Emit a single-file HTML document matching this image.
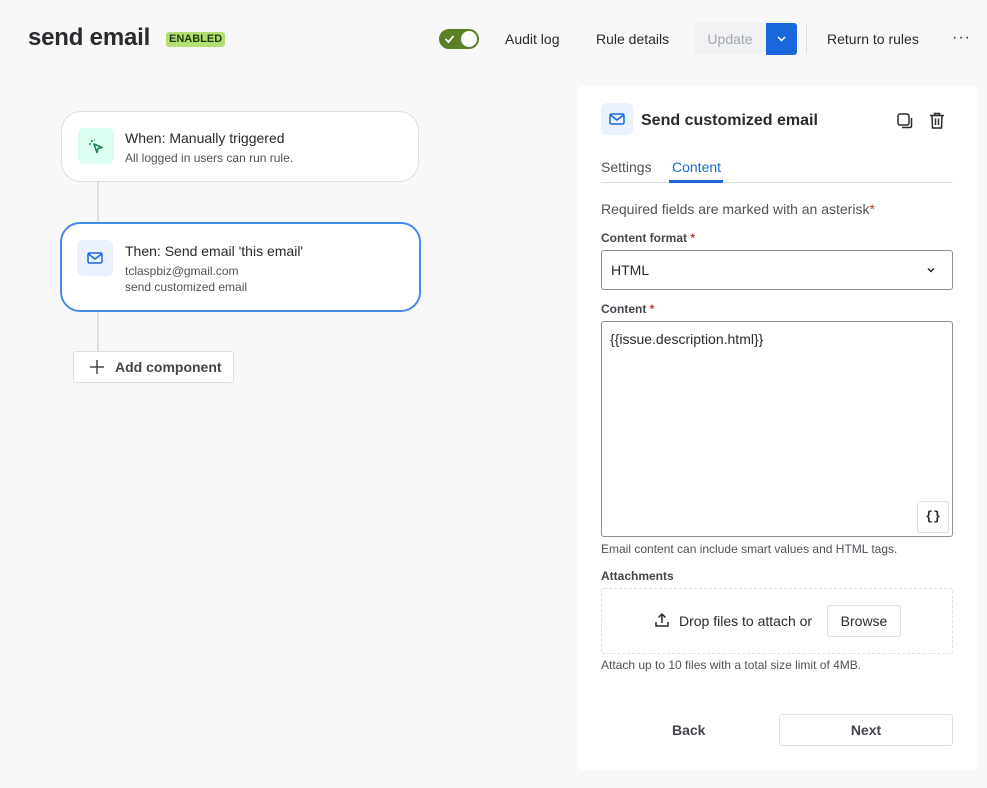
<!DOCTYPE html>
<html><head><meta charset="utf-8"><style>
*{box-sizing:border-box;margin:0;padding:0}
body{width:987px;height:788px;background:#f8f8f8;font-family:"Liberation Sans",sans-serif;color:#292a2e;position:relative;overflow:hidden}
.a{position:absolute}
.t{font-size:14px}
.card{position:absolute;background:#fff;border:1px solid #dcdfe4;border-radius:20px}
.ic{position:absolute;width:36px;height:36px;border-radius:6px}
.sub{font-size:12px;color:#505258}
.lbl{font-size:12px;font-weight:bold;color:#44464c}
.req{color:#c9372c}
</style></head><body>
<div class="a" style="left:28px;top:24px;font-size:24px;font-weight:bold;letter-spacing:-0.2px">send email</div>
<div class="a" style="left:166px;top:32px;background:#b3df72;color:#1f3a0f;font-size:11px;font-weight:bold;padding:1px 3px;border-radius:3px;line-height:13px">ENABLED</div>
<div class="a" style="left:439px;top:29px;width:40px;height:20px;border-radius:10px;background:#5b7f24">
 <svg class="a" style="left:5px;top:5px" width="11" height="10" viewBox="0 0 11 10"><path d="M1.5 5 L4.5 8 L9.5 2" stroke="#fff" stroke-width="1.8" fill="none"/></svg>
 <div class="a" style="left:22px;top:2px;width:16px;height:16px;border-radius:8px;background:#fff"></div>
</div>
<div class="a t" style="left:505px;top:31px">Audit log</div>
<div class="a t" style="left:596px;top:31px">Rule details</div>
<div class="a t" style="left:694px;top:23px;width:72px;height:32px;background:#f1f2f4;color:#a5a8ae;border-radius:3px 0 0 3px;text-align:center;line-height:32px">Update</div>
<div class="a" style="left:766px;top:23px;width:31px;height:32px;background:#1868db;border-radius:0 3px 3px 0">
 <svg class="a" style="left:10px;top:12px" width="11" height="8" viewBox="0 0 11 8"><path d="M2 2 L5.5 5.5 L9 2" stroke="#fff" stroke-width="1.5" fill="none"/></svg></div>
<div class="a" style="left:806px;top:24px;width:1px;height:30px;background:#dcdfe4"></div>
<div class="a t" style="left:827px;top:31px">Return to rules</div>
<div class="a" style="left:952px;top:29px;font-size:16px;letter-spacing:1px">···</div>

<div class="a" style="left:97px;top:182px;width:2px;height:170px;background:#dcdfe4"></div>
<div class="card" style="left:61px;top:111px;width:358px;height:71px">
 <div class="ic" style="left:16px;top:16px;background:#dcfff1"><svg class="a" style="left:8px;top:8px" width="20" height="20" viewBox="0 0 20 20"><path d="M8 8 L16 11.5 L12 12.5 L11 16.5 Z" stroke="#1f845a" stroke-width="1.6" fill="none" stroke-linejoin="round"/><path d="M4 9 A5 5 0 0 1 9 4" stroke="#1f845a" stroke-width="1.6" fill="none" stroke-dasharray="2 1.5"/></svg></div>
 <div class="a t" style="left:63px;top:18px">When: Manually triggered</div>
 <div class="a sub" style="left:63px;top:39px">All logged in users can run rule.</div>
</div>
<div class="card" style="left:60px;top:222px;width:361px;height:90px;border:2px solid #4688ec">
 <div class="ic" style="left:15px;top:16px;background:#e9f2fe"><svg class="a" style="left:9px;top:10px" width="18" height="16" viewBox="0 0 18 16"><rect x="2" y="3" width="14" height="10" rx="1.5" stroke="#1868db" stroke-width="1.5" fill="none"/><path d="M2.5 4 L9 9 L15.5 4" stroke="#1868db" stroke-width="1.5" fill="none"/></svg></div>
 <div class="a t" style="left:63px;top:19px">Then: Send email 'this email'</div>
 <div class="a sub" style="left:63px;top:40px">tclaspbiz@gmail.com</div>
 <div class="a sub" style="left:63px;top:56px">send customized email</div>
</div>
<div class="a t" style="left:73px;top:351px;width:161px;height:32px;background:#fff;border:1px solid #dcdfe4;border-radius:3px;font-weight:bold;color:#44464c;line-height:30px;padding-left:41px">Add component</div>
<svg class="a" style="left:89px;top:359px" width="16" height="16" viewBox="0 0 16 16"><path d="M8 1V15M1 8H15" stroke="#44464c" stroke-width="1.5"/></svg>

<div class="a" style="left:577px;top:86px;width:400px;height:684px;background:#fff;border-radius:6px">
 <div class="ic" style="left:24px;top:17px;width:32px;height:32px;background:#e9f2fe"><svg class="a" style="left:7px;top:8px" width="18" height="16" viewBox="0 0 18 16"><rect x="2" y="3" width="14" height="10" rx="1.5" stroke="#1868db" stroke-width="1.5" fill="none"/><path d="M2.5 4 L9 9 L15.5 4" stroke="#1868db" stroke-width="1.5" fill="none"/></svg></div>
 <div class="a" style="left:64px;top:26px;font-size:16px;font-weight:bold">Send customized email</div>
 <svg class="a" style="left:319px;top:26px" width="18" height="18" viewBox="0 0 18 18"><rect x="2" y="2" width="11" height="11" rx="2" stroke="#292a2e" stroke-width="1.5" fill="none"/><path d="M15.5 6 V14 a1.5 1.5 0 0 1 -1.5 1.5 H6" stroke="#292a2e" stroke-width="1.5" fill="none"/></svg>
 <svg class="a" style="left:351px;top:25px" width="18" height="19" viewBox="0 0 18 19"><path d="M2 4.5H16M6.5 4.5V2.5H11.5V4.5M4 4.5 L4.5 17 H13.5 L14 4.5M7.5 7.5V14M10.5 7.5V14" stroke="#292a2e" stroke-width="1.5" fill="none"/></svg>
 <div class="a t" style="left:24px;top:73px;color:#505258">Settings</div>
 <div class="a t" style="left:95px;top:73px;color:#1868db">Content</div>
 <div class="a" style="left:24px;top:96px;width:352px;height:1px;background:#dcdfe4"></div>
 <div class="a" style="left:92px;top:94px;width:54px;height:3px;background:#1868db"></div>
 <div class="a t" style="left:24px;top:115px;color:#505258">Required fields are marked with an asterisk<span class="req">*</span></div>
 <div class="a lbl" style="left:24px;top:145px">Content format <span class="req">*</span></div>
 <div class="a" style="left:24px;top:164px;width:352px;height:40px;border:1px solid #8c8f97;border-radius:3px"><div class="a t" style="left:9px;top:11px">HTML</div>
  <svg class="a" style="left:324px;top:15px" width="10" height="8" viewBox="0 0 10 8"><path d="M2 2.5 L5 5.5 L8 2.5" stroke="#292a2e" stroke-width="1.5" fill="none"/></svg></div>
 <div class="a lbl" style="left:24px;top:216px">Content <span class="req">*</span></div>
 <div class="a" style="left:24px;top:235px;width:352px;height:216px;border:1px solid #8c8f97;border-radius:3px">
  <div class="a t" style="left:8px;top:9px">{{issue.description.html}}</div>
  <div class="a" style="left:315px;top:179px;width:32px;height:32px;border:1px solid #dcdfe4;border-radius:3px;font-family:'Liberation Mono',monospace;font-size:13px;font-weight:bold;text-align:center;line-height:30px">{}</div>
 </div>
 <div class="a sub" style="left:24px;top:456px">Email content can include smart values and HTML tags.</div>
 <div class="a lbl" style="left:24px;top:483px">Attachments</div>
 <div class="a" style="left:24px;top:502px;width:352px;height:66px;border:1px dashed #dcdfe4;border-radius:3px">
  <svg class="a" style="left:52px;top:23px" width="16" height="16" viewBox="0 0 16 16"><path d="M8 11V2M4.5 5.5 L8 2 L11.5 5.5M2 10V14H14V10" stroke="#292a2e" stroke-width="1.5" fill="none"/></svg>
  <div class="a t" style="left:77px;top:24px">Drop files to attach or</div>
  <div class="a t" style="left:225px;top:16px;width:74px;height:32px;border:1px solid #dcdfe4;border-radius:3px;text-align:center;line-height:30px">Browse</div>
 </div>
 <div class="a sub" style="left:24px;top:572px">Attach up to 10 files with a total size limit of 4MB.</div>
 <div class="a t" style="left:95px;top:636px;font-weight:bold;color:#44464c">Back</div>
 <div class="a t" style="left:202px;top:628px;width:174px;height:32px;border:1px solid #dcdfe4;border-radius:3px;text-align:center;line-height:30px;font-weight:bold;color:#44464c">Next</div>
</div>
</body></html>
